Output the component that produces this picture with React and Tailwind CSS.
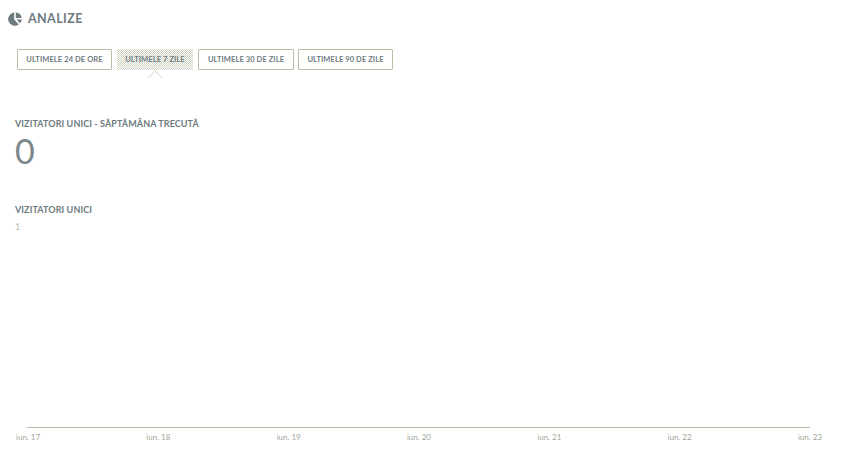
const ranges = [
  { label: 'ULTIMELE 24 DE ORE', width: 'w-[95px]' },
  { label: 'ULTIMELE 7 ZILE', width: 'w-[76px]', active: true },
  { label: 'ULTIMELE 30 DE ZILE', width: 'w-[96px]' },
  { label: 'ULTIMELE 90 DE ZILE', width: 'w-[95px] -ml-px' },
]

const days = ['iun. 17', 'iun. 18', 'iun. 19', 'iun. 20', 'iun. 21', 'iun. 22', 'iun. 23']

function PieIcon() {
  return (
    <svg width="14" height="14" viewBox="0 0 14 14" className="text-[#6d7b80]">
      <path fill="currentColor" d="M6.2 0.6v6.9l4.6 4.9A6.6 6.6 0 1 1 6.2 0.6z" />
      <path fill="currentColor" d="M7.8 0.4A5.9 5.9 0 0 1 13.6 6H7.8z" />
      <path fill="currentColor" d="M8.6 7.6h5.2a6.6 6.6 0 0 1-1.9 3.7z" />
    </svg>
  )
}

function RangeButton({ label, width, active }) {
  if (active) {
    return (
      <div className={`relative h-[21px] ${width} flex items-center justify-center bg-[repeating-conic-gradient(#cdd2c1_0_25%,#ffffff_0_50%)] bg-[length:2px_2px]`}>
        <span className="text-[7.5px] font-bold tracking-[0.1px] text-[#6d7b80]">{label}</span>
        <div className="absolute left-1/2 top-[21px] -ml-2 h-2 w-4 [clip-path:polygon(50%_0,100%_100%,85%_100%,50%_25%,15%_100%,0_100%)] bg-[repeating-conic-gradient(#cdd2c1_0_25%,#ffffff_0_50%)] bg-[length:2px_2px]" />
      </div>
    )
  }
  return (
    <div className={`h-[21px] ${width} flex items-center justify-center rounded-[1px] border border-[#b9c0aa]`}>
      <span className="text-[7.5px] font-bold tracking-[0.1px] text-[#6d7b80]">{label}</span>
    </div>
  )
}

export default function App() {
  return (
    <div className="flex h-[463px] w-[841px] flex-col overflow-hidden bg-white font-['Lato',sans-serif]">
      <div className="flex items-center gap-[6px] pl-2 pt-[11px]">
        <PieIcon />
        <h1 className="text-[12.5px] leading-[15px] font-bold tracking-[0.4px] text-[#6d7b80]">ANALIZE</h1>
      </div>

      <div className="mt-[23px] flex gap-[5px] pl-[17px]">
        {ranges.map(r => (
          <RangeButton key={r.label} {...r} />
        ))}
      </div>

      <div className="mt-[48px] pl-[15px]">
        <h2 className="text-[9px] leading-3 font-bold tracking-[0.1px] text-[#6d7b80]">VIZITATORI UNICI - SĂPTĂMÂNA TRECUTĂ</h2>
        <div className="mt-[1px] text-[34px] leading-[40px] font-normal text-[#7b888c]">0</div>
      </div>

      <div className="mt-[33px] pl-[15px]">
        <h2 className="text-[9px] leading-3 font-bold tracking-[0.1px] text-[#6d7b80]">VIZITATORI UNICI</h2>
        <div className="mt-[5px] text-[9px] leading-3 text-[#b9c0aa]">1</div>
      </div>

      <div className="mt-[194px]">
        <div className="ml-[27px] h-px w-[783px] bg-[#b4baa6]" />
        <div className="mt-[3px] flex justify-between pr-[19px] pl-4">
          {days.map(d => (
            <span key={d} className="text-[8px] leading-3 text-[#9fa69a]">{d}</span>
          ))}
        </div>
      </div>
    </div>
  )
}
